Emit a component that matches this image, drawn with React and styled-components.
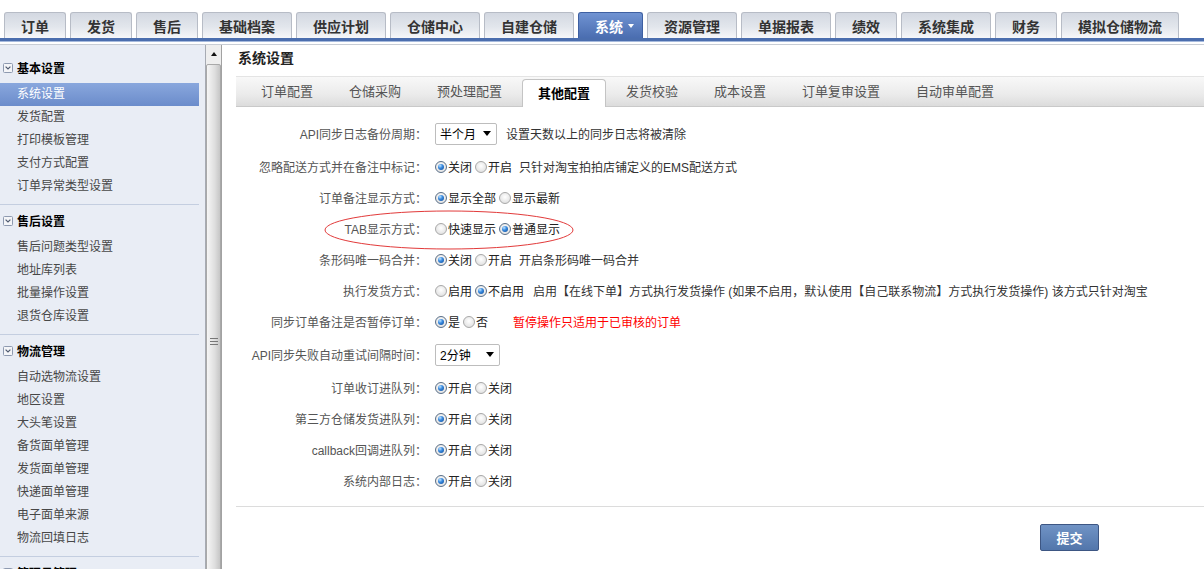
import styled, { createGlobalStyle } from "styled-components";

const GlobalStyle = createGlobalStyle`
  html, body {
    margin: 0;
    padding: 0;
    background: #fff;
  }
  body {
    font-family: "Liberation Sans", "Noto Sans CJK SC", sans-serif;
    font-size: 12px;
    color: #333;
  }
`;

const Page = styled.div`
  width: 1204px;
  height: 569px;
  overflow: hidden;
  display: flex;
  flex-direction: column;
`;

const NavBar = styled.div`
  display: flex;
  align-items: flex-end;
  gap: 4px;
  height: 26px;
  padding: 12px 0 0 4px;
  border-bottom: 3px solid #4b6eae;
  box-shadow: 0 1px 0 #a6badd;
`;

const NavTab = styled.div`
  height: 26px;
  box-sizing: border-box;
  padding: ${(p) => (p.$active ? "0 8px 0 16px" : "0 16px")};
  display: flex;
  align-items: center;
  gap: 5px;
  border: 1px solid ${(p) => (p.$active ? "#3e60a2" : "#b7bcc6")};
  border-bottom: none;
  border-radius: 3px 3px 0 0;
  background: ${(p) =>
    p.$active
      ? "linear-gradient(#7093d2, #4a6db0)"
      : "linear-gradient(#d3d8e1, #e2e6ec 55%, #f6f7f9)"};
  color: ${(p) => (p.$active ? "#fff" : "#333")};
  font-size: 14px;
  font-weight: bold;
  white-space: nowrap;
`;

const NavCaret = styled.span`
  width: 0;
  height: 0;
  border-left: 3px solid transparent;
  border-right: 3px solid transparent;
  border-top: 4px solid #fff;
`;

const Body = styled.div`
  flex: 1;
  min-height: 0;
  display: flex;
  margin-top: 3px;
  border-top: 1px solid #c8cdd5;
  overflow: hidden;
`;

const Sidebar = styled.div`
  width: 206px;
  flex-shrink: 0;
  box-sizing: border-box;
  padding: 7px 6px 0 0;
  background: #e9edf5;
  border-right: 1px solid #a7abb3;
`;

const Section = styled.div`
  padding-bottom: 6px;
  border-bottom: 1px solid #c4cee0;
`;

const SectionHead = styled.div`
  height: 31px;
  display: flex;
  align-items: center;
  gap: 4px;
  padding-left: 3px;
  font-size: 12px;
  font-weight: bold;
  color: #000;
`;

const MenuItem = styled.div`
  height: 23px;
  line-height: 23px;
  padding-left: 17px;
  font-size: 12px;
  color: ${(p) => (p.$active ? "#fff" : "#474747")};
  background: ${(p) =>
    p.$active ? "linear-gradient(#89a7dd, #6b8ccb)" : "transparent"};
`;

const Scrollbar = styled.div`
  width: 16px;
  flex-shrink: 0;
  box-sizing: border-box;
  display: flex;
  flex-direction: column;
  background: #eeeeee;
  border-right: 1px solid #a2a2a2;
`;

const ScrollArrow = styled.div`
  height: 18px;
  flex-shrink: 0;
  display: flex;
  align-items: center;
  justify-content: center;
  &::before {
    content: "";
    border-left: 3px solid transparent;
    border-right: 3px solid transparent;
    border-bottom: 4px solid #111;
  }
`;

const ScrollThumb = styled.div`
  height: 554px;
  flex-shrink: 0;
  margin-top: 1px;
  box-sizing: border-box;
  border: 1px solid #a9a9a9;
  border-radius: 2px;
  background: linear-gradient(to right, #f6f6f6, #dedede 60%, #c6c6c6);
  display: flex;
  align-items: center;
  justify-content: center;
`;

const Main = styled.div`
  flex: 1;
  min-width: 0;
  padding-left: 14px;
  display: flex;
  flex-direction: column;
`;

const Title = styled.div`
  height: 31px;
  line-height: 26px;
  padding-left: 2px;
  font-size: 14px;
  font-weight: bold;
  color: #222;
`;

const TabBar = styled.div`
  height: 29px;
  display: flex;
  align-items: flex-end;
  padding-left: 7px;
  border-top: 1px solid #e4e4e4;
  border-bottom: 1px solid #c9c9c9;
  background: linear-gradient(#f8f8f8, #ebebeb 60%, #dcdcdc);
`;

const Tab = styled.div`
  box-sizing: border-box;
  height: ${(p) => (p.$active ? "28px" : "29px")};
  line-height: ${(p) => (p.$active ? "27px" : "29px")};
  padding: ${(p) => (p.$active ? "0 15px" : "0 18px")};
  margin: ${(p) => (p.$active ? "0 2px -1px" : "0")};
  border: ${(p) => (p.$active ? "1px solid #c4c4c4" : "none")};
  border-bottom: none;
  border-radius: 4px 4px 0 0;
  background: ${(p) => (p.$active ? "#fff" : "transparent")};
  color: ${(p) => (p.$active ? "#000" : "#555")};
  font-weight: ${(p) => (p.$active ? 600 : 400)};
  font-size: 13px;
  white-space: nowrap;
`;

const Form = styled.div`
  position: relative;
  margin-top: 9px;
`;

const FormRow = styled.div`
  display: flex;
  align-items: center;
  height: ${(p) => (p.$tall ? "35px" : "31px")};
`;

const Label = styled.div`
  width: 191px;
  flex-shrink: 0;
  margin-right: 8px;
  text-align: right;
  color: #555;
  white-space: nowrap;
`;

const Field = styled.div`
  display: flex;
  align-items: center;
  color: #222;
  white-space: nowrap;
`;

const Option = styled.span`
  display: inline-flex;
  align-items: center;
  gap: 1px;
  margin-right: 3px;
`;

const RadioMark = styled.span`
  position: relative;
  width: 12px;
  height: 12px;
  box-sizing: border-box;
  border-radius: 50%;
  border: 1px solid ${(p) => (p.$on ? "#5a6f88" : "#a8a8a8")};
  background: radial-gradient(circle at 50% 40%, #ffffff, #d9d9d9);
  &::after {
    content: "";
    display: ${(p) => (p.$on ? "block" : "none")};
    position: absolute;
    left: 2px;
    top: 2px;
    width: 6px;
    height: 6px;
    border-radius: 50%;
    background: radial-gradient(circle at 35% 30%, #bfe4ff 0, #3a8be0 40%, #0b4793 100%);
  }
`;

const Note = styled.span`
  margin-left: ${(p) => p.$gap ?? 4}px;
  color: ${(p) => (p.$red ? "#ff0000" : "#333")};
`;

const SelectBox = styled.div`
  width: ${(p) => p.$w}px;
  height: 22px;
  box-sizing: border-box;
  display: flex;
  align-items: center;
  justify-content: space-between;
  padding: 0 5px 0 4px;
  border: 1px solid #bdbdbd;
  border-radius: 2px;
  background: #fff;
  color: #000;
  font-size: 12px;
`;

const SelectCaret = styled.span`
  border-left: 4px solid transparent;
  border-right: 4px solid transparent;
  border-top: 5px solid #000;
`;

const Oval = styled.svg`
  position: absolute;
  left: 88px;
  top: 94px;
  pointer-events: none;
`;

const Divider = styled.div`
  margin-top: 10px;
  border-top: 1px solid #dcdcdc;
`;

const ButtonRow = styled.div`
  display: flex;
  justify-content: flex-end;
  padding: 17px 105px 0 0;
`;

const SubmitButton = styled.button`
  width: 59px;
  height: 27px;
  padding: 0;
  border: 1px solid #3d5683;
  border-radius: 2px;
  background: linear-gradient(#7093c5, #5276ab);
  color: #fff;
  font-family: inherit;
  font-size: 13px;
  font-weight: bold;
`;

const navTabs = [
  "订单", "发货", "售后", "基础档案", "供应计划", "仓储中心", "自建仓储",
  "系统", "资源管理", "单据报表", "绩效", "系统集成", "财务", "模拟仓储物流",
];

const sections = [
  { title: "基本设置", items: ["系统设置", "发货配置", "打印模板管理", "支付方式配置", "订单异常类型设置"] },
  { title: "售后设置", items: ["售后问题类型设置", "地址库列表", "批量操作设置", "退货仓库设置"] },
  {
    title: "物流管理",
    items: ["自动选物流设置", "地区设置", "大头笔设置", "备货面单管理", "发货面单管理", "快递面单管理", "电子面单来源", "物流回填日志"],
  },
  { title: "管理员管理", items: ["管理员列表", "角色权限"] },
];

const tabs = ["订单配置", "仓储采购", "预处理配置", "其他配置", "发货校验", "成本设置", "订单复审设置", "自动审单配置"];

const CollapseIcon = () => (
  <svg width="10" height="10" viewBox="0 0 10 10">
    <rect x="0.5" y="0.5" width="9" height="9" rx="1" fill="#f4f5f8" stroke="#8e9ab0" />
    <path d="M2.6 3.6 L5 6 L7.4 3.6" stroke="#4f5a70" strokeWidth="1.2" fill="none" />
  </svg>
);

const Grip = () => (
  <svg width="8" height="7" viewBox="0 0 8 7">
    <path d="M0 0.5H8M0 3.5H8M0 6.5H8" stroke="#777" strokeWidth="1" />
  </svg>
);

const Radio = ({ on, children }) => (
  <Option>
    <RadioMark $on={on} />
    {children}
  </Option>
);

const Choice = ({ options, value }) =>
  options.map((o, i) => (
    <Radio key={o} on={i === value}>
      {o}
    </Radio>
  ));

const App = () => {
  return (
    <Page>
      <GlobalStyle />
      <NavBar>
        {navTabs.map((t) => (
          <NavTab key={t} $active={t === "系统"}>
            {t}
            {t === "系统" && <NavCaret />}
          </NavTab>
        ))}
      </NavBar>
      <Body>
        <Sidebar>
          {sections.map((s, si) => (
            <Section key={s.title}>
              <SectionHead>
                <CollapseIcon />
                {s.title}
              </SectionHead>
              {s.items.map((it, i) => (
                <MenuItem key={it} $active={si === 0 && i === 0}>
                  {it}
                </MenuItem>
              ))}
            </Section>
          ))}
        </Sidebar>
        <Scrollbar>
          <ScrollArrow />
          <ScrollThumb>
            <Grip />
          </ScrollThumb>
        </Scrollbar>
        <Main>
          <Title>系统设置</Title>
          <TabBar>
            {tabs.map((t, i) => (
              <Tab key={t} $active={i === 3}>
                {t}
              </Tab>
            ))}
          </TabBar>
          <Form>
            <FormRow $tall>
              <Label>API同步日志备份周期：</Label>
              <Field>
                <SelectBox $w={62}>
                  半个月
                  <SelectCaret />
                </SelectBox>
                <Note $gap={9}>设置天数以上的同步日志将被清除</Note>
              </Field>
            </FormRow>
            <FormRow>
              <Label>忽略配送方式并在备注中标记：</Label>
              <Field>
                <Choice options={["关闭", "开启"]} value={0} />
                <Note>只针对淘宝拍拍店铺定义的EMS配送方式</Note>
              </Field>
            </FormRow>
            <FormRow>
              <Label>订单备注显示方式：</Label>
              <Field>
                <Choice options={["显示全部", "显示最新"]} value={0} />
              </Field>
            </FormRow>
            <FormRow>
              <Label>TAB显示方式：</Label>
              <Field>
                <Choice options={["快速显示", "普通显示"]} value={1} />
              </Field>
            </FormRow>
            <FormRow>
              <Label>条形码唯一码合并：</Label>
              <Field>
                <Choice options={["关闭", "开启"]} value={0} />
                <Note>开启条形码唯一码合并</Note>
              </Field>
            </FormRow>
            <FormRow>
              <Label>执行发货方式：</Label>
              <Field>
                <Choice options={["启用", "不启用"]} value={1} />
                <Note $gap={6}>
                  启用【在线下单】方式执行发货操作 (如果不启用，默认使用【自己联系物流】方式执行发货操作) 该方式只针对淘宝
                </Note>
              </Field>
            </FormRow>
            <FormRow>
              <Label>同步订单备注是否暂停订单：</Label>
              <Field>
                <Choice options={["是", "否"]} value={0} />
                <Note $gap={22} $red>
                  暂停操作只适用于已审核的订单
                </Note>
              </Field>
            </FormRow>
            <FormRow $tall>
              <Label>API同步失败自动重试间隔时间：</Label>
              <Field>
                <SelectBox $w={65}>
                  2分钟
                  <SelectCaret />
                </SelectBox>
              </Field>
            </FormRow>
            <FormRow>
              <Label>订单收订进队列：</Label>
              <Field>
                <Choice options={["开启", "关闭"]} value={0} />
              </Field>
            </FormRow>
            <FormRow>
              <Label>第三方仓储发货进队列：</Label>
              <Field>
                <Choice options={["开启", "关闭"]} value={0} />
              </Field>
            </FormRow>
            <FormRow>
              <Label>callback回调进队列：</Label>
              <Field>
                <Choice options={["开启", "关闭"]} value={0} />
              </Field>
            </FormRow>
            <FormRow>
              <Label>系统内部日志：</Label>
              <Field>
                <Choice options={["开启", "关闭"]} value={0} />
              </Field>
            </FormRow>
            <Oval width="250" height="40" viewBox="0 0 250 40">
              <ellipse cx="125" cy="20" rx="124" ry="19" fill="none" stroke="#e23a3a" strokeWidth="1" />
            </Oval>
          </Form>
          <Divider />
          <ButtonRow>
            <SubmitButton>提交</SubmitButton>
          </ButtonRow>
        </Main>
      </Body>
    </Page>
  );
};

export default App;
